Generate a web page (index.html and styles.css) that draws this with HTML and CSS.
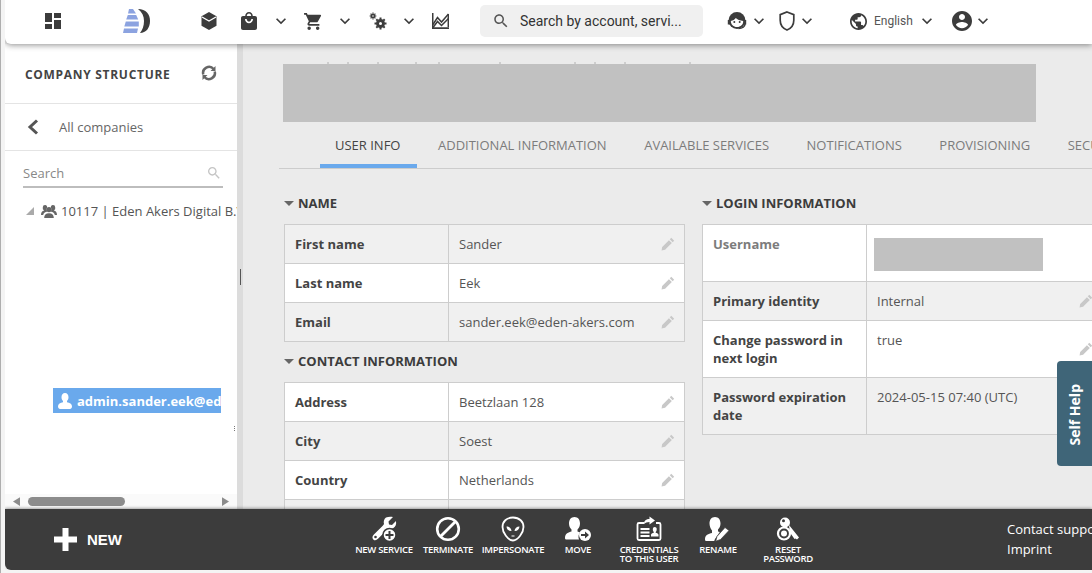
FILE: index.html
```html
<!DOCTYPE html>
<html lang="en">
<head>
<meta charset="utf-8">
<title>User info</title>
<link rel="stylesheet" href="styles.css">
</head>
<body>
<div class="app">
  <header class="topbar">
    <svg class="ico dash" viewBox="0 0 16 16"><path d="M0 0h7v9H0zM9 0h7v5H9zM9 7h7v9H9zM0 11h7v5H0z"/></svg>
    <svg class="logo" viewBox="0 0 28 26"><path fill="#8ca3e0" d="M6 1h4l3 4.500H5zM4.800 7h8.400l2 4.500H3.200zM2.800 13.500h13v5H1.300zM1 20.500h14l-1 4.500H0z"/><path fill="#3c3c3c" d="M15 1c8 0 12 5 12 12s-4 12-10 12c2.500-3 4-7 4-12S19 4 15 1z"/></svg>
    <svg class="ico box" viewBox="0 0 18 18"><path d="M9 0l7.500 4.300v9.400L9 18l-7.500-4.300V4.300z"/><path fill="none" stroke="#fff" stroke-width="1.300" d="M2 5l7 4 7-4"/></svg>
    <svg class="ico bag" viewBox="0 0 16 18"><path d="M8 0c2.200 0 3.800 1.700 3.800 4H14c1.100 0 2 .9 2 2v10c0 1.100-.9 2-2 2H2c-1.100 0-2-.9-2-2V6c0-1.100.9-2 2-2h2.200C4.200 1.700 5.800 0 8 0zm0 1.600C6.700 1.600 5.800 2.600 5.800 4h4.400c0-1.400-.9-2.400-2.200-2.400zM4 7c0 2.400 1.800 4.300 4 4.300S12 9.400 12 7h-1.700c0 1.400-1 2.600-2.300 2.600S5.700 8.400 5.700 7z"/></svg>
    <svg class="chev gap-bag" viewBox="2.400 2.400 19.200 19.200"><path d="M16.590 8.590L12 13.170 7.410 8.590 6 10l6 6 6-6z"/></svg>
    <svg class="ico cart" viewBox="1 2 21 20"><path d="M7 18c-1.100 0-1.990.900-1.990 2S5.900 22 7 22s2-.900 2-2-.900-2-2-2zM1 2v2h2l3.600 7.590-1.350 2.450c-.160.280-.250.610-.250.960 0 1.100.900 2 2 2h12v-2H7.420c-.140 0-.250-.110-.250-.250l.030-.120.900-1.630h7.450c.750 0 1.410-.410 1.750-1.030l3.580-6.490c.080-.140.120-.310.120-.480 0-.550-.450-1-1-1H5.210l-.940-2H1zm16 16c-1.100 0-1.990.900-1.990 2s.890 2 1.990 2 2-.900 2-2-.900-2-2-2z"/></svg>
    <svg class="chev gap-cart" viewBox="2.400 2.400 19.200 19.200"><path d="M16.590 8.590L12 13.170 7.410 8.590 6 10l6 6 6-6z"/></svg>
    <svg class="ico gears" viewBox="0 0 18 18"><g fill="none" stroke="#3c3c3c"><circle cx="4" cy="4" r="1.700" stroke-width="1.800"/><circle cx="11.500" cy="11.500" r="3" stroke-width="3"/><path stroke-width="1.200" d="M4 .6v1M4 6.400v1M.6 4h1M6.400 4h1M1.600 1.600l.7.700M5.700 5.700l.7.700M1.600 6.400l.7-.7M5.700 2.300l.7-.7"/><path stroke-width="2" d="M11.500 5.500v2M11.500 15.500v2M5.500 11.500h2M15.500 11.500h2M7.300 7.300l1.300 1.300M14.400 14.400l1.300 1.300M7.300 15.700l1.300-1.300M14.400 8.600l1.300-1.300"/></g></svg>
    <svg class="chev gap-gears" viewBox="2.400 2.400 19.200 19.200"><path d="M16.590 8.590L12 13.170 7.410 8.590 6 10l6 6 6-6z"/></svg>
    <svg class="ico chart" viewBox="0 0 17 16"><path d="M0 0h1.500v14.300H17V16H0z"/><g fill="none" stroke="#3c3c3c" stroke-width="1.500"><path d="M1 11.500L5.500 4.500 9.500 9 16.500 1"/><path d="M1 14.500L5.500 8.500 9.500 12.500 16.500 5.500"/><path d="M16.300 1v13"/></g></svg>
    <div class="search-box">
      <svg class="search-ico" viewBox="0 0 24 24"><path d="M15.500 14h-.790l-.280-.270C15.410 12.590 16 11.110 16 9.500 16 5.910 13.090 3 9.500 3S3 5.910 3 9.500 5.910 16 9.500 16c1.610 0 3.090-.590 4.230-1.570l.270.280v.790l5 4.990L20.490 19l-4.990-5zm-6 0C7.010 14 5 11.990 5 9.500S7.010 5 9.500 5 14 7.010 14 9.500 11.990 14 9.500 14z"/></svg>
      <span class="search-text">Search by account, servi...</span>
    </div>
    <svg class="ico face" viewBox="0 0 20 20"><circle cx="10" cy="9.500" r="8.500"/><path fill="#fff" d="M3.800 10C6 9.600 7.800 8.600 8.800 7c1.500 1.500 4 2.600 7.400 3 .2 3.500-2.500 6-6.200 6-3.600 0-6.200-2.600-6.200-6z"/><circle cx="7.300" cy="11" r="1"/><circle cx="12.700" cy="11" r="1"/><path d="M.8 9h2.400v4.500H.8zM16.800 9h2.400v4.500h-2.400z"/><path fill="none" stroke="#3c3c3c" stroke-width="1.500" d="M18 13c0 2.500-2.500 4.500-6.500 4.500"/></svg>
    <svg class="chev gap-face" viewBox="2.400 2.400 19.200 19.200"><path d="M16.590 8.590L12 13.170 7.410 8.590 6 10l6 6 6-6z"/></svg>
    <svg class="ico shield" viewBox="0 0 16 20"><path fill="none" stroke="#3c3c3c" stroke-width="1.700" d="M8 1l6.800 2.700v5.500c0 4.500-2.900 8.200-6.800 9.800C4.100 17.400 1.200 13.700 1.200 9.200V3.700z"/></svg>
    <svg class="chev gap-shield" viewBox="2.400 2.400 19.200 19.200"><path d="M16.590 8.590L12 13.170 7.410 8.590 6 10l6 6 6-6z"/></svg>
    <svg class="ico globe" viewBox="2 2 20 20"><path d="M12 2C6.480 2 2 6.480 2 12s4.480 10 10 10 10-4.480 10-10S17.520 2 12 2zm-1 17.930c-3.950-.490-7-3.850-7-7.930 0-.620.080-1.210.210-1.790L9 15v1c0 1.100.900 2 2 2v1.930zm6.900-2.540c-.260-.810-1-1.390-1.900-1.390h-1v-3c0-.550-.450-1-1-1H8v-2h2c.550 0 1-.450 1-1V7h2c1.100 0 2-.900 2-2v-.410c2.930 1.190 5 4.060 5 7.410 0 2.080-.800 3.970-2.100 5.390z"/></svg>
    <span class="lang">English</span>
    <svg class="chev gap-lang" viewBox="2.400 2.400 19.200 19.200"><path d="M16.590 8.590L12 13.170 7.410 8.590 6 10l6 6 6-6z"/></svg>
    <svg class="ico account" viewBox="2 2 20 20"><path d="M12 2C6.480 2 2 6.480 2 12s4.480 10 10 10 10-4.480 10-10S17.520 2 12 2zm0 3c1.660 0 3 1.340 3 3s-1.340 3-3 3-3-1.340-3-3 1.340-3 3-3zm0 14.200c-2.500 0-4.710-1.280-6-3.220.030-1.990 4-3.080 6-3.080 1.990 0 5.970 1.090 6 3.080-1.290 1.940-3.500 3.220-6 3.220z"/></svg>
    <svg class="chev gap-account" viewBox="2.400 2.400 19.200 19.200"><path d="M16.590 8.590L12 13.170 7.410 8.590 6 10l6 6 6-6z"/></svg>
  </header>

  <div class="main">
    <aside class="sidebar">
      <div class="side-head">
        <span class="side-title">COMPANY STRUCTURE</span>
        <svg class="refresh" viewBox="0 0 16 16"><path fill="none" stroke="#666" stroke-width="2.500" d="M2.300 9.500A6 6 0 0 1 12.600 4M13.700 6.500A6 6 0 0 1 3.400 12"/><path fill="#666" d="M14.500 1v5h-5zM1.500 15v-5h5z"/></svg>
      </div>
      <div class="side-back">
        <svg class="back" viewBox="0 0 12 16"><path fill="none" stroke="#555" stroke-width="3" d="M10 1.500L3 8l7 6.500"/></svg>
        <span>All companies</span>
      </div>
      <div class="side-search">
        <span>Search</span>
        <svg viewBox="0 0 24 24"><path fill="#c4c4c4" d="M15.500 14h-.790l-.280-.270C15.410 12.590 16 11.110 16 9.500 16 5.910 13.090 3 9.500 3S3 5.910 3 9.500 5.910 16 9.500 16c1.610 0 3.090-.590 4.230-1.570l.270.280v.790l5 4.990L20.490 19l-4.990-5zm-6 0C7.010 14 5 11.990 5 9.500S7.010 5 9.500 5 14 7.010 14 9.500 11.990 14 9.500 14z"/></svg>
      </div>
      <div class="tree">
        <div class="tree-root">
          <svg class="tree-arrow" viewBox="0 0 8 8"><path fill="#aaa" d="M8 0v8H0z"/></svg>
          <svg class="tree-group" viewBox="0 0 16 14"><path fill="#666" d="M8 3a2.600 2.600 0 1 1 0 5.200A2.600 2.600 0 0 1 8 3zM3.200 14c0-3 1.500-4.800 4.800-4.800s4.800 1.800 4.800 4.800z"/><path fill="#666" d="M4 1a2.200 2.200 0 0 1 1.700 3.600c-.3 1.300.1 2.400.9 3C3.700 8.200 2.500 9.500 2.200 11H0c0-2.600 1-4 3.200-4.400A3 3 0 0 1 1.800 3.200 2.200 2.200 0 0 1 4 1zM12 1a2.200 2.200 0 0 0-1.700 3.600c.3 1.300-.1 2.400-.9 3 2.900.6 4.100 1.900 4.400 3.400H16c0-2.600-1-4-3.200-4.400a3 3 0 0 0 1.400-3.400A2.200 2.200 0 0 0 12 1z"/></svg>
          <span>10117 | Eden Akers Digital B.V.</span>
        </div>
        <div class="tree-node">
          <svg viewBox="0 0 14 16"><path fill="#fff" d="M7 0c2.200 0 3.500 1.800 3.500 4.200 0 1.600-.7 3-1.500 3.800v1.300c2.600.6 5 1.700 5 4 0 1.700-1 2.700-2 2.700H2c-1 0-2-1-2-2.700 0-2.300 2.400-3.400 5-4V8C4.200 7.200 3.500 5.800 3.500 4.200 3.500 1.800 4.800 0 7 0z"/></svg>
          <span>admin.sander.eek@eden-akers.com</span>
        </div>
        <div class="tree-dots"></div>
      </div>
      <div class="hscroll">
        <svg class="hscroll-arrow" viewBox="0 0 8 10"><path fill="#8c8c8c" d="M8 0v10L0 5z"/></svg>
        <div class="hscroll-thumb"></div>
        <svg class="hscroll-arrow end" viewBox="0 0 8 10"><path fill="#8c8c8c" d="M0 0v10l8-5z"/></svg>
      </div>
    </aside>

    <div class="splitter"><span class="grip"></span></div>

    <main class="content">
      <svg class="ticks" viewBox="0 0 760 2"><path stroke="#b0b0b0" d="M45 0v2M65 0v2M95 0v2M133 0v2M156 0v2M217 0v2M292 0v2M312 0v2M342 0v2M407 0v2"/></svg>
      <div class="redact-title"></div>
      <nav class="tabs">
        <span class="tab active">USER INFO</span>
        <span class="tab">ADDITIONAL INFORMATION</span>
        <span class="tab">AVAILABLE SERVICES</span>
        <span class="tab">NOTIFICATIONS</span>
        <span class="tab">PROVISIONING</span>
        <span class="tab">SECURITY</span>
      </nav>
      <div class="columns">
        <section class="col">
          <h3 class="sec"><i class="caret"></i>NAME</h3>
          <table class="info">
            <tr class="alt"><th>First name</th><td>Sander<svg class="pen"><use href="#pen"/></svg></td></tr>
            <tr><th>Last name</th><td>Eek<svg class="pen"><use href="#pen"/></svg></td></tr>
            <tr class="alt"><th>Email</th><td>sander.eek@eden-akers.com<svg class="pen"><use href="#pen"/></svg></td></tr>
          </table>
          <h3 class="sec second"><i class="caret"></i>CONTACT INFORMATION</h3>
          <table class="info">
            <tr><th>Address</th><td>Beetzlaan 128<svg class="pen"><use href="#pen"/></svg></td></tr>
            <tr class="alt"><th>City</th><td>Soest<svg class="pen"><use href="#pen"/></svg></td></tr>
            <tr><th>Country</th><td>Netherlands<svg class="pen"><use href="#pen"/></svg></td></tr>
            <tr class="alt"><th>Phone</th><td>&nbsp;<svg class="pen"><use href="#pen"/></svg></td></tr>
          </table>
        </section>
        <section class="col">
          <h3 class="sec"><i class="caret"></i>LOGIN INFORMATION</h3>
          <table class="info">
            <tr class="tall-user"><th class="muted">Username</th><td class="redact-cell"><div class="redact-user"></div></td></tr>
            <tr class="alt"><th>Primary identity</th><td>Internal<svg class="pen"><use href="#pen"/></svg></td></tr>
            <tr class="tall"><th>Change password in next login</th><td>true<svg class="pen"><use href="#pen"/></svg></td></tr>
            <tr class="alt tall"><th>Password expiration date</th><td>2024-05-15 07:40 (UTC)</td></tr>
          </table>
        </section>
      </div>
    </main>
  </div>

  <footer class="bottombar">
    <div class="new">
      <svg viewBox="0 0 23 23"><path fill="#fff" d="M8.500 0h6v8.500H23v6h-8.500V23h-6v-8.500H0v-6h8.500z"/></svg>
      <span>NEW</span>
    </div>
    <div class="action w64">
      <svg viewBox="0 0 26 26"><path fill="#fff" d="M22 1l-4.500 4.500.5 3 3 .5L25 5c.6 3.500-.5 6-3 7.300-1.600.8-3.200.8-4.500.4-.7.300-1.400 1-2 1.600L7 22.800c-1.600 1.600-3.200 2-4.700.6-1.400-1.500-1-3.200.6-4.800l8.600-8.600c.6-.6 1.200-1.200 1.500-1.900-.7-2.400 0-5 2-6.500C17.100.7 19.400.4 22 1z"/><circle cx="4.500" cy="21" r="1.300" fill="#3c3c3c"/><circle cx="18.500" cy="19" r="6.500" fill="#fff" stroke="#3c3c3c" stroke-width="1.500"/><path fill="#3c3c3c" d="M17.500 15h2v3h3v2h-3v3h-2v-3h-3v-2h3z"/></svg>
      <span>NEW SERVICE</span>
    </div>
    <div class="action w64">
      <svg viewBox="0 0 26 26"><circle cx="13" cy="13" r="10.800" fill="none" stroke="#fff" stroke-width="2.600"/><path stroke="#fff" stroke-width="2.800" d="M20 6L6 20"/></svg>
      <span>TERMINATE</span>
    </div>
    <div class="action w66">
      <svg viewBox="0 0 26 26"><path fill="none" stroke="#fff" stroke-width="1.800" d="M13 1.500c6.500 0 10.500 4.200 10.500 9.500 0 5.500-5.500 13.500-10.500 13.500S2.500 16.500 2.500 11C2.500 5.700 6.500 1.500 13 1.500z"/><path fill="#fff" d="M6.500 10.500c2.800 0 4.800 1.800 5 4.500-2.800.2-4.900-1.600-5-4.500zM19.500 10.500c-2.800 0-4.800 1.800-5 4.500 2.800.2 4.900-1.600 5-4.500zM11.500 19.500h3v1h-3z"/></svg>
      <span>IMPERSONATE</span>
    </div>
    <div class="action w64">
      <svg viewBox="0 0 26 26"><path fill="#fff" d="M9.500 1c3.500 0 5.500 2.800 5.500 6.500 0 2.500-1 4.500-2.500 6v2c1 .3 1.700.5 2.500.9-1.500 1.800-2 4.600-1 7.100H1c-.8 0-1-.8-1-2 0-3.800 3.500-5.300 6.500-6v-2C5 12 4 10 4 7.500 4 3.800 6 1 9.500 1z"/><circle cx="20" cy="19" r="6" fill="#fff"/><path fill="#3c3c3c" d="M16 18h4v-2.500l4 3.500-4 3.500V20h-4z"/></svg>
      <span>MOVE</span>
    </div>
    <div class="action w78">
      <svg viewBox="0 0 26 26"><path fill="none" stroke="#fff" stroke-width="1.800" d="M8 7H3a1.500 1.500 0 0 0-1.500 1.500v14A1.500 1.500 0 0 0 3 24h20a1.500 1.500 0 0 0 1.500-1.500v-14A1.500 1.500 0 0 0 23 7h-3"/><path fill="#fff" d="M4.500 12h9v2h-9zM4.500 15.500h9v2h-9zM4.500 19h9v2h-9z"/><path fill="#fff" d="M18.500 11a2.200 2.200 0 0 1 2.200 2.500c0 1.100-.5 2-1 2.500v.8c1.300.3 2.800.9 2.800 2.200v1.500H15V19c0-1.300 1.500-1.900 2.800-2.200V16c-.5-.5-1-1.400-1-2.500a2.200 2.200 0 0 1 1.700-2.500z"/><path fill="#fff" d="M8 8c0-3.200 2.200-5 5.500-5V.5L19 4.500 13.500 8.500V6C11 6 9.300 6.700 8 8z"/></svg>
      <span>CREDENTIALS<br>TO THIS USER</span>
    </div>
    <div class="action w60">
      <svg viewBox="0 0 26 26"><path fill="#fff" d="M10 1c3.500 0 5.500 2.800 5.500 6.500 0 2.500-1 4.500-2.500 6v2l1.800.6L10 23l-.8 2H1c-.8 0-1-.8-1-2 0-3.800 3.500-5.300 7-6v-2.500C5.500 12.500 4.500 10 4.500 7.500 4.500 3.800 6.500 1 10 1z"/><path fill="#fff" d="M20 11.500l4 3-8.500 9-4.800 1.700 1.300-4.800z" stroke="#3c3c3c" stroke-width=".7"/></svg>
      <span>RENAME</span>
    </div>
    <div class="action w80">
      <svg viewBox="0 0 26 26"><circle cx="10" cy="6.500" r="5" fill="#fff"/><circle cx="8.500" cy="4.800" r="1.500" fill="#3c3c3c"/><circle cx="9" cy="17.500" r="6" fill="none" stroke="#fff" stroke-width="2.200"/><circle cx="9" cy="17.500" r="3" fill="#fff"/><path fill="#fff" d="M14 9l10 12.500-2 2-1.500-1-1 .5L13.500 14.500l1-.8z"/></svg>
      <span>RESET<br>PASSWORD</span>
    </div>
    <div class="foot-links">
      <span>Contact support</span>
      <span>Imprint</span>
    </div>
  </footer>
</div>

<aside class="self-help"><span>Self Help</span></aside>

<svg class="defs" width="0" height="0">
  <symbol id="pen" viewBox="0 0 12 12"><path fill="#c8c8c8" d="M8.800.7l2.500 2.500-1.300 1.300L7.500 2zM6.800 2.700l2.500 2.500L3.500 11 .5 11.500 1 8.500z"/></symbol>
</svg>
</body>
</html>
```

FILE: styles.css
```css
* { box-sizing: border-box; }
html, body { margin: 0; height: 100%; overflow: hidden; }
body {
  width: 1092px;
  height: 573px;
  background: #f4f4f4;
  border-left: 1px solid #aeaeae;
  font-family: "Open Sans", "Liberation Sans", sans-serif;
  font-size: 13px;
  color: #444;
  position: relative;
}
svg { display: block; flex: none; }
.defs { position: absolute; }

.app { display: flex; flex-direction: column; height: 570px; margin-left: 4px; overflow: hidden; }

/* top bar */
.topbar {
  height: 44px;
  flex: none;
  display: flex;
  align-items: center;
  background: #fff;
  border-radius: 0 0 0 6px;
  box-shadow: 0 1px 6px rgba(0,0,0,.45);
  position: relative;
  z-index: 2;
  padding: 0 0 2px 40px;
}
.ico { fill: #3c3c3c; }
.dash { width: 16px; height: 16px; }
.logo { width: 28px; height: 26px; margin-left: 62px; }
.box { width: 18px; height: 18px; margin-left: 49px; }
.bag { width: 16px; height: 18px; margin-left: 23px; }
.chev { width: 16px; height: 16px; fill: #3c3c3c; }
.gap-bag { margin-left: 16px; }
.cart { width: 18px; height: 17px; margin-left: 15px; }
.gap-cart { margin-left: 15px; }
.gears { width: 18px; height: 18px; margin-left: 16px; }
.gap-gears { margin-left: 14px; }
.chart { width: 17px; height: 16px; margin-left: 15px; }
.search-box {
  width: 223px;
  height: 32px;
  margin-left: 31px;
  background: #f0f0f0;
  border-radius: 5px;
  display: flex;
  align-items: center;
  padding-left: 12px;
  font-family: Roboto, sans-serif;
  font-size: 14px;
  color: #333;
}
.search-ico { width: 18px; height: 18px; fill: #555; }
.search-text { margin-left: 10px; }
.face { width: 20px; height: 20px; margin-left: 24px; }
.gap-face { margin-left: 4px; }
.shield { width: 16px; height: 20px; margin-left: 12px; }
.gap-shield { margin-left: 4px; }
.globe { width: 17px; height: 17px; margin-left: 35px; }
.lang { font-family: Roboto, sans-serif; font-size: 12px; color: #555; margin-left: 7px; width: 39px; }
.gap-lang { margin-left: 6px; }
.account { width: 20px; height: 20px; margin-left: 17px; }
.gap-account { margin-left: 3px; }

/* layout */
.main { flex: 1; min-height: 0; display: flex; }

/* sidebar */
.sidebar { width: 232px; flex: none; background: #fff; display: flex; flex-direction: column; }
.side-head {
  height: 60px;
  flex: none;
  display: flex;
  align-items: center;
  padding: 1px 20px 0 20px;
  justify-content: space-between;
  border-bottom: 1px solid #e4e4e4;
}
.side-title { font-weight: 700; font-size: 12px; letter-spacing: .7px; color: #444; }
.refresh { width: 16px; height: 16px; margin-top: -3px; }
.side-back {
  height: 47px;
  flex: none;
  display: flex;
  align-items: center;
  padding-left: 22px;
  border-bottom: 1px solid #e4e4e4;
  color: #666;
  font-size: 13px;
}
.back { width: 12px; height: 16px; margin-right: 20px; }
.side-search {
  height: 37px;
  flex: none;
  margin: 0 14px 0 18px;
  display: flex;
  align-items: center;
  justify-content: space-between;
  border-bottom: 2px solid #bdbdbd;
  color: #888;
  font-size: 13px;
  padding: 9px 1px 0 0;
}
.side-search svg { width: 16px; height: 16px; }
.tree { flex: 1; min-height: 0; overflow: hidden; }
.tree-root {
  display: flex;
  align-items: center;
  height: 20px;
  margin-top: 13px;
  padding-left: 21px;
  white-space: nowrap;
  color: #555;
}
.tree-root span { min-width: 0; overflow: hidden; }
.tree-arrow { width: 8px; height: 8px; }
.tree-group { width: 16px; height: 14px; margin: 0 4px 0 7px; }
.tree-node {
  width: 168px;
  height: 25px;
  margin: 167px 0 0 48px;
  background: #6aa9ec;
  color: #fff;
  font-weight: 700;
  display: flex;
  align-items: center;
  padding-left: 5px;
  overflow: hidden;
  white-space: nowrap;
}
.tree-node span { min-width: 0; overflow: hidden; }
.tree-node svg { width: 14px; height: 16px; margin-right: 5px; }
.tree-dots { width: 1px; height: 5px; margin: 13px 0 0 229px; border-left: 1px dotted #777; }
.hscroll {
  height: 15px;
  flex: none;
  background: #fafafa;
  display: flex;
  align-items: center;
  padding: 0 8px;
}
.hscroll-arrow { width: 7px; height: 9px; }
.hscroll-arrow.end { margin-left: 97px; }
.hscroll-thumb { width: 97px; height: 9px; margin-left: 8px; border-radius: 5px; background: #8c8c8c; }
.splitter { width: 6px; flex: none; background: #dcdcdc; display: flex; align-items: center; justify-content: center; }
.grip { width: 1px; height: 16px; background: #555; }

/* content */
.content { flex: 1; min-width: 0; background: #ebebeb; overflow: hidden; padding: 18px 0 0 36px; }
.ticks { width: 760px; height: 2px; margin-left: 4px; }
.redact-title { width: 753px; height: 58px; margin-left: 4px; background: #c1c1c1; }
.tabs {
  display: flex;
  gap: 7.500px;
  height: 47px;
  padding-left: 41px;
  border-bottom: 1px solid #ccc;
  white-space: nowrap;
  width: 900px;
}
.tab { flex: none; display: flex; align-items: center; height: 46px; padding: 4px 15px 0; border-bottom: 4px solid transparent; font-size: 13px; color: #7c7c7c; }
.tab.active { color: #444; border-bottom-color: #6aa9ec; padding-right: 17px; margin-right: -2px; }
.columns { display: flex; gap: 17px; margin-left: 5px; width: 820px; }
.col { width: 401px; flex: none; }
.sec {
  margin: 0;
  height: 55px;
  padding: 25px 0 12px;
  display: flex;
  align-items: center;
  font-size: 13px;
  font-weight: 700;
  line-height: 18px;
  color: #3c3c3c;
}
.sec.second { height: 40px; padding: 0 0 2px; }
.caret { width: 0; height: 0; border: 5px solid transparent; border-top: 5px solid #666; border-bottom: 0; margin-right: 4px; }
.info { width: 401px; border-collapse: collapse; table-layout: fixed; background: #fff; }
.info th, .info td { border: 1px solid #cdcdcd; height: 39px; padding: 10px 10px 8px; vertical-align: top; line-height: 18px; text-align: left; font-size: 13px; }
.info th { width: 164px; font-weight: 700; color: #444; white-space: normal; }
.info td { position: relative; color: #555; white-space: nowrap; }
.info .alt th, .info .alt td { background: #f0f0f0; }
.info .tall th, .info .tall td { height: 57px; }
.info .tall-user th, .info .tall-user td { height: 57px; }
.info th.muted { color: #7c7c7c; }
.info td.redact-cell { padding: 13px 7px 0; }
.redact-user { width: 169px; height: 33px; background: #c1c1c1; }
.pen { position: absolute; width: 14px; height: 14px; right: 9px; top: 50%; margin-top: -7px; }

/* bottom bar */
.bottombar {
  height: 61px;
  flex: none;
  background: #3c3c3c;
  color: #fff;
  display: flex;
  align-items: flex-start;
  border-radius: 0 0 0 6px;
  box-shadow: 0 -1px 3px rgba(0,0,0,.35);
  position: relative;
  z-index: 2;
}
.new { width: 347px; height: 61px; flex: none; display: flex; align-items: center; padding-left: 49px; font-family: "Liberation Sans", sans-serif; font-weight: 700; font-size: 15px; }
.new svg { width: 23px; height: 23px; margin-right: 10px; }
.action { flex: none; display: flex; flex-direction: column; align-items: center; padding-top: 7px; font-size: 9.500px; font-weight: 600; letter-spacing: -.3px; line-height: 9px; text-align: center; }
.action svg { width: 26px; height: 26px; margin-bottom: 3px; }
.w60 { width: 60px; }
.w64 { width: 64px; }
.w66 { width: 66px; }
.w78 { width: 78px; }
.w80 { width: 80px; }
.foot-links { margin-left: 179px; padding-top: 11px; display: flex; flex-direction: column; gap: 2px; white-space: nowrap; line-height: 18px; font-size: 13px; }

/* floating tab */
.self-help {
  position: absolute;
  right: 0;
  top: 361px;
  width: 35px;
  height: 105px;
  background: #3f6578;
  border-radius: 4px 0 0 4px;
  color: #fff;
  font-weight: 700;
  font-size: 14px;
  display: flex;
  align-items: center;
  justify-content: center;
  padding-top: 3px;
  z-index: 3;
}
.self-help span { writing-mode: vertical-rl; transform: rotate(180deg); white-space: nowrap; }
```
